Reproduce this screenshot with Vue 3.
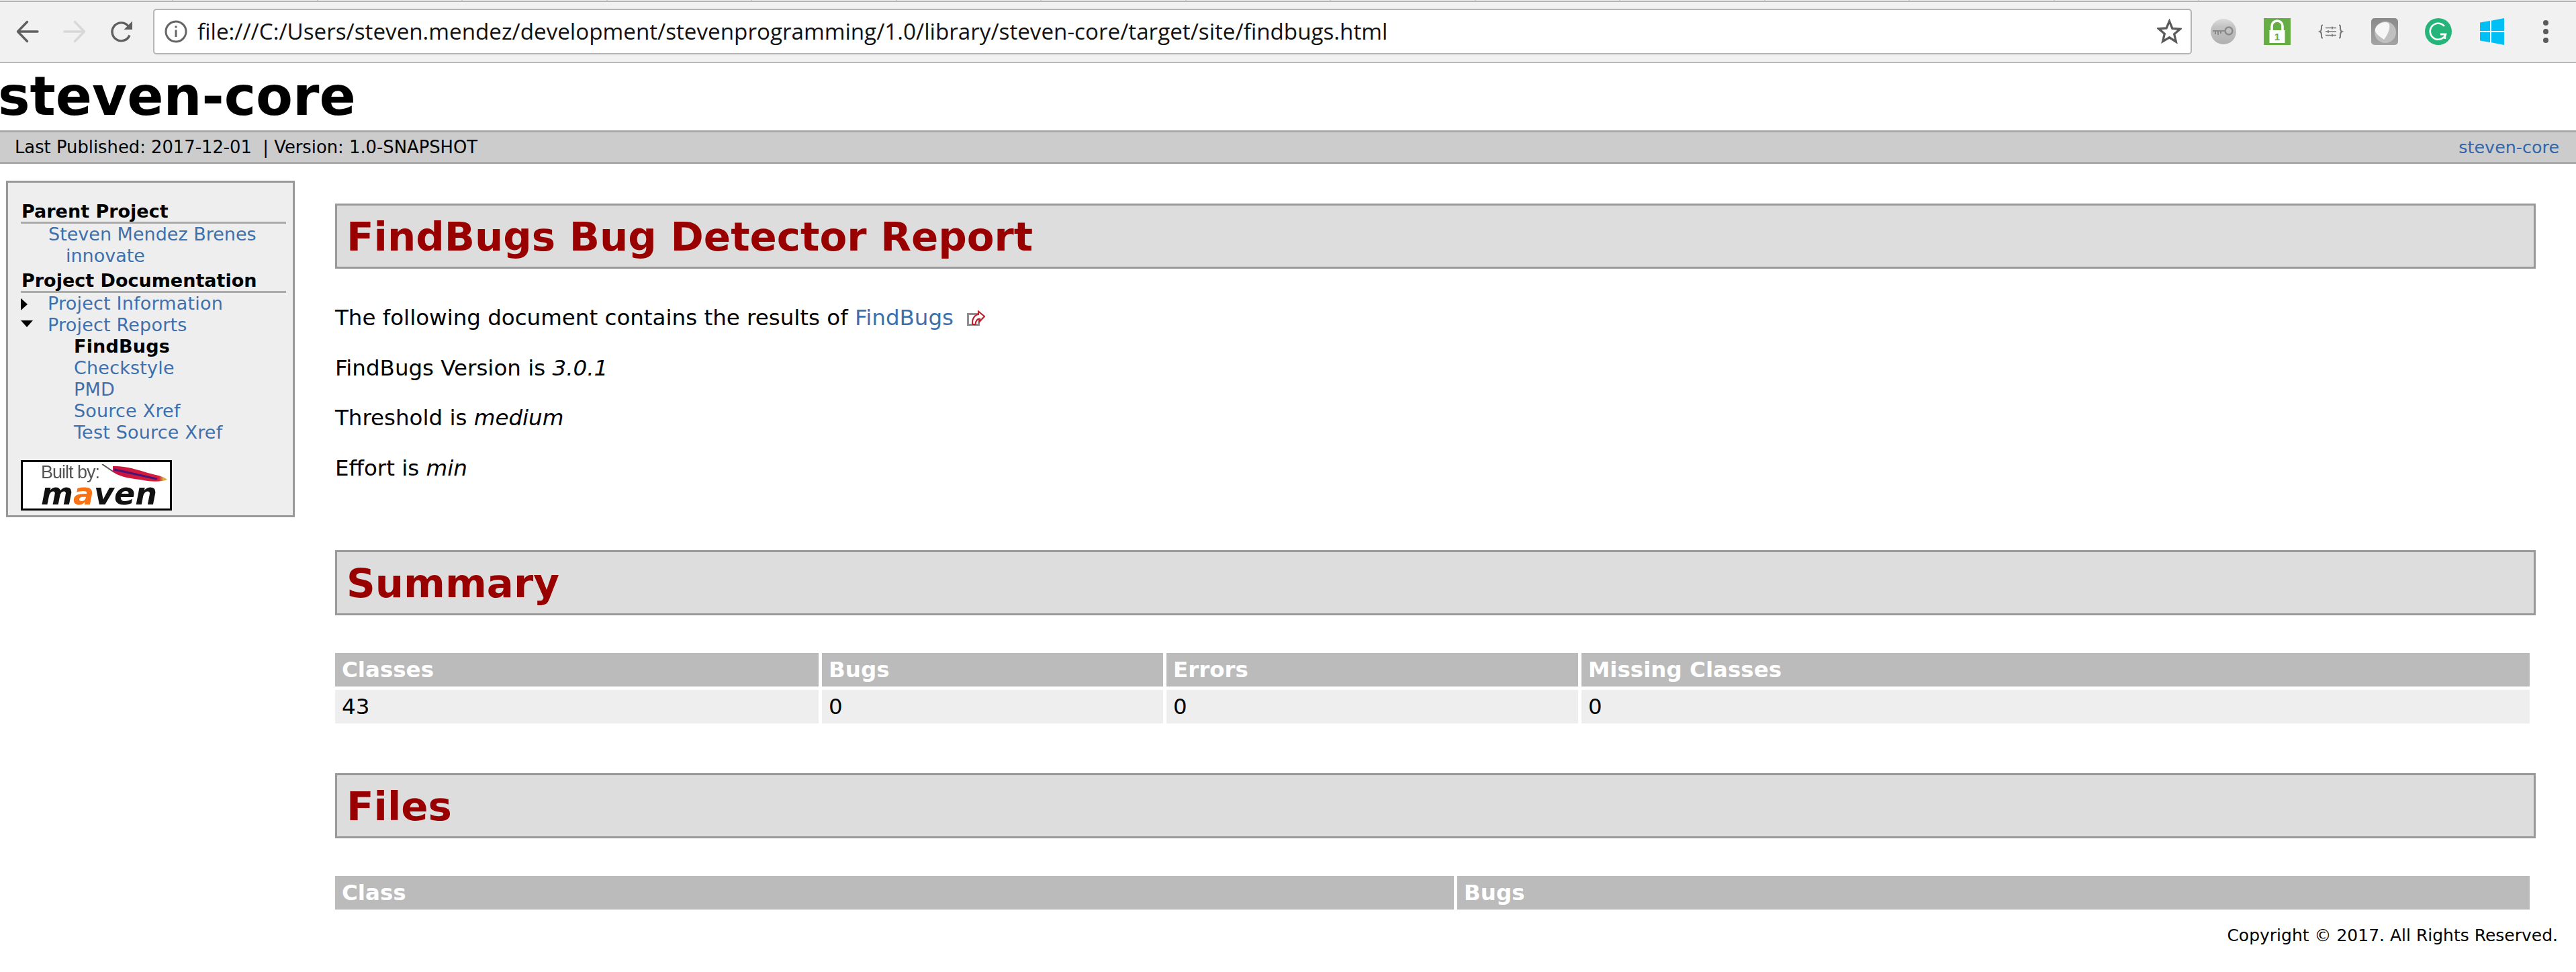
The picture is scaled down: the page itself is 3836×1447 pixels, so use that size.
<template>
  <div class="page">
    <div class="tabstrip">
      <span v-for="n in 15" :key="n" class="tab"></span>
    </div>
    <header class="toolbar">
      <svg class="nav-icon" viewBox="0 0 34 34" fill="none" stroke="#5f5f5f" stroke-width="3.4" stroke-linecap="round" stroke-linejoin="round">
        <path d="M32 17H3M16.500 2.500 2.500 17l14 14.500" />
      </svg>
      <svg class="nav-icon" viewBox="0 0 34 34" fill="none" stroke="#d8d8d8" stroke-width="3.4" stroke-linecap="round" stroke-linejoin="round">
        <path d="M2 17h29M17.500 2.500 31.500 17l-14 14.500" />
      </svg>
      <svg class="nav-icon" viewBox="0 0 34 34" fill="none" stroke="#5f5f5f" stroke-width="3.400">
        <path d="M29 22.500a13.500 13.500 0 1 1-1.500-13" />
        <path d="M33 1.500V14H20.500z" fill="#5f5f5f" stroke="none" />
      </svg>
      <div class="omnibox">
        <svg class="info" viewBox="0 0 34 34" fill="none" stroke="#666" stroke-width="3">
          <circle cx="17" cy="17" r="15" />
          <path d="M17 14.500V25" />
          <path d="M17 8.500v3" />
        </svg>
        <span class="url">file:///C:/Users/steven.mendez/development/stevenprogramming/1.0/library/steven-core/target/site/findbugs.html</span>
        <svg class="star" viewBox="0 0 36 36" fill="none" stroke="#5a5a5a" stroke-width="3.200">
          <path d="m18 3.500 4.300 10.500 11.200.9-8.500 7.300 2.600 11L18 27l-9.600 5.700 2.600-11-8.500-7.300 11.200-.9z" />
        </svg>
      </div>
      <div class="extensions">
        <svg class="ext" viewBox="0 0 40 40">
          <defs>
            <linearGradient id="keyBg" x1="0" y1="0" x2="0" y2="1">
              <stop offset="0" stop-color="#dcdcdc" />
              <stop offset=".3" stop-color="#c4c4c4" />
              <stop offset="1" stop-color="#b0b0b0" />
            </linearGradient>
          </defs>
          <circle cx="20" cy="20" r="19" fill="url(#keyBg)" />
          <circle cx="28" cy="19" r="5.500" fill="none" stroke="#8a8a8a" stroke-width="2.400" />
          <path d="M4 19h18M8 19v5M12 19v6M16 19v4" stroke="#8a8a8a" stroke-width="2" fill="none" />
        </svg>
        <div class="ext lock">
          <svg viewBox="0 0 40 40">
            <path d="M12 21V12a8 8 0 0 1 16 0v9" fill="none" stroke="#fff" stroke-width="3.600" />
            <rect x="8.500" y="18" width="23" height="19" fill="#fff" />
          </svg>
          <span class="lock-num">1</span>
        </div>
        <svg class="ext" viewBox="0 0 40 40" fill="none" stroke="#777" stroke-width="1.500">
          <path d="M8 10.500c-2.500 0-2 2-2 4.500s0 4-2.500 5c2.500 1 2.500 2.500 2.500 5s-.5 4.500 2 4.500M32 10.500c2.500 0 2 2 2 4.500s0 4 2.500 5c-2.500 1-2.500 2.500-2.500 5s.5 4.500-2 4.500" stroke-width="2" />
          <path d="M12 14.500h16M12 20h16M12 25.500h16" />
          <path d="M22 12.500v4M16 18v4M22 23.500v4" stroke="#777" />
        </svg>
        <svg class="ext" viewBox="0 0 40 40">
          <defs>
            <linearGradient id="shieldBg" x1="0" y1="0" x2="0" y2="1">
              <stop offset="0" stop-color="#8a8a8a" />
              <stop offset="1" stop-color="#a4a4a4" />
            </linearGradient>
          </defs>
          <rect width="40" height="40" rx="5" fill="url(#shieldBg)" />
          <circle cx="21" cy="21" r="16" fill="#c0c0c0" />
          <path d="M6 17c1-7 9-11 15-11 5 0 7 3 6 9-1 7-5 13-8 17-4-3-14-9-13-15z" fill="#f6f6f6" />
        </svg>
        <svg class="ext" viewBox="0 0 40 40">
          <circle cx="20" cy="20" r="20" fill="#25b57a" />
          <path d="M29 12a12 12 0 1 0 2 12h-8" fill="none" stroke="#fff" stroke-width="2.600" />
          <path d="M30 31V24h-7" fill="none" stroke="#fff" stroke-width="2.600" />
        </svg>
        <svg class="ext win" viewBox="0 0 36 40" fill="#00bff5">
          <path d="M0 6.500 15 4v15H0zM17 3.700 36 0v19H17zM0 21h15v15L0 33.500zM17 21h19v19l-19-3.700z" />
        </svg>
        <div class="dots">
          <i></i><i></i><i></i>
        </div>
      </div>
    </header>

    <div class="banner">
      <h1>steven-core</h1>
    </div>

    <div class="breadcrumbs">
      <span>Last Published: 2017-12-01 &nbsp;| Version: 1.0-SNAPSHOT</span>
      <a href="#">steven-core</a>
    </div>

    <div class="content">
      <aside class="sidebar">
        <h5>Parent Project</h5>
        <a class="nav-link parent" href="#">Steven Mendez Brenes</a>
        <a class="nav-link parent-sub" href="#">innovate</a>
        <h5 class="second">Project Documentation</h5>
        <div v-for="item in topNav" :key="item.label" class="nav-row">
          <span class="arrow" :class="item.open ? 'down' : 'right'"></span>
          <a class="nav-link" href="#">{{ item.label }}</a>
        </div>
        <template v-for="r in reports" :key="r">
          <strong v-if="r === 'FindBugs'" class="report">{{ r }}</strong>
          <a v-else class="nav-link report" href="#">{{ r }}</a>
        </template>

        <div class="maven">
          <div class="maven-inner">
            <span class="built">Built by:</span>
            <span class="maven-word">m<b>a</b>ven</span>
          </div>
          <svg class="feather" viewBox="0 0 100 30">
            <defs>
              <linearGradient id="feather" x1="0" y1="0" x2="1" y2="0">
                <stop offset="0" stop-color="#c8123f" />
                <stop offset=".85" stop-color="#d81f3a" />
                <stop offset=".93" stop-color="#d8b040" />
              </linearGradient>
            </defs>
            <path d="M2 0 20 12" stroke="#555" stroke-width="2" />
            <path d="M18 3C35 2 55 8 70 13c12 3 24 5 29 10-9 4-27 3-41 0-16-2-33-5-40-12z" fill="url(#feather)" />
            <path d="M20 8c20 4 40 9 64 14" stroke="#4a1478" stroke-width="3" fill="none" />
          </svg>
        </div>
      </aside>

      <main class="main">
        <h2>FindBugs Bug Detector Report</h2>
        <p class="first">
          The following document contains the results of
          <a href="#">FindBugs</a>
          <svg class="external" viewBox="0 0 27 23">
            <rect x="1.500" y="5.500" width="16" height="16" fill="#fff" stroke="#8f8f8f" stroke-width="3" />
            <path d="M17 1.500 26 9l-7 7.500v-4c-4 0-6 3-6.500 8.500H8.500C6.500 14 11 7 17 6z" fill="#fff" stroke="#c0202a" stroke-width="2.200" />
          </svg>
        </p>
        <p>FindBugs Version is <em>3.0.1</em></p>
        <p>Threshold is <em>medium</em></p>
        <p>Effort is <em>min</em></p>

        <h2 class="summary">Summary</h2>
        <div class="grid summary-grid">
          <div v-for="h in summaryHead" :key="h" class="th">{{ h }}</div>
          <div v-for="(v, i) in summaryRow" :key="i" class="td">{{ v }}</div>
        </div>

        <h2 class="files">Files</h2>
        <div class="grid files-grid">
          <div class="th">Class</div>
          <div class="th">Bugs</div>
        </div>
      </main>
    </div>

    <footer class="footer">Copyright © 2017. All Rights Reserved.</footer>
  </div>
</template>

<script setup>
const topNav = [
  { label: "Project Information", open: false },
  { label: "Project Reports", open: true },
];

const reports = ["FindBugs", "Checkstyle", "PMD", "Source Xref", "Test Source Xref"];

const summaryHead = ["Classes", "Bugs", "Errors", "Missing Classes"];
const summaryRow = ["43", "0", "0", "0"];
</script>

<style>
html,
body {
  margin: 0;
  background: #fff;
}
</style>

<style scoped>
.page {
  width: 3836px;
  height: 1447px;
  overflow: hidden;
  background: #fff;
  color: #000;
  font-family: "DejaVu Sans", Verdana, sans-serif;
  font-size: 32.500px;
}

.tabstrip {
  display: flex;
  height: 3px;
  background: #f1f1f1;
  border-bottom: 2px solid #b4b4b4;
  box-sizing: border-box;
}

.tab {
  width: 215.500px;
  border-right: 2px solid #cfcfcf;
  box-sizing: border-box;
}

.tab:first-child {
  width: 258px;
}

.toolbar {
  display: flex;
  align-items: center;
  height: 91px;
  box-sizing: border-box;
  background: #f1f1f1;
  border-bottom: 2px solid #b9b9b9;
  padding: 0 0 2px 24px;
}

.nav-icon {
  width: 34px;
  height: 34px;
  margin-right: 36px;
  flex: none;
}

.omnibox {
  display: flex;
  align-items: center;
  width: 3036px;
  height: 68px;
  margin-left: -6px;
  box-sizing: border-box;
  background: #fff;
  border: 2px solid #b4b4b4;
  border-radius: 5px;
  padding: 0 13px 0 15px;
  flex: none;
}

.info {
  width: 34px;
  height: 34px;
  flex: none;
}

.url {
  margin-left: 15px;
  flex: 1;
  font-family: "Open Sans", sans-serif;
  font-size: 33.200px;
  color: #111;
  white-space: nowrap;
}

.star {
  width: 37px;
  height: 37px;
  flex: none;
}

.extensions {
  display: flex;
  align-items: center;
  margin-left: 27px;
}

.ext {
  width: 40px;
  height: 40px;
  margin-right: 40px;
  flex: none;
  position: relative;
}

.lock {
  background: #66ad44;
  overflow: hidden;
}

.lock svg {
  width: 40px;
  height: 40px;
  display: block;
}

.lock-num {
  position: absolute;
  left: 0;
  right: 0;
  top: 19px;
  text-align: center;
  font-family: "Liberation Sans", sans-serif;
  font-weight: bold;
  font-size: 15px;
  line-height: 18px;
  color: #66ad44;
}

.win {
  width: 36px;
  margin-left: 2px;
  margin-right: 58px;
}

.dots {
  display: flex;
  flex-direction: column;
  gap: 5px;
}

.dots i {
  display: block;
  width: 8px;
  height: 8px;
  border-radius: 50%;
  background: #5a5a5a;
}

.banner {
  height: 100px;
  display: flex;
  align-items: center;
}

h1 {
  margin: 0 0 0 -3px;
  font-size: 80px;
  line-height: 100px;
  font-weight: bold;
}

.breadcrumbs {
  display: flex;
  justify-content: space-between;
  align-items: center;
  height: 50px;
  box-sizing: border-box;
  background: #ccc;
  border-top: 3px solid #aaa;
  border-bottom: 3px solid #aaa;
  padding: 0 25px 0 22px;
  font-size: 25.800px;
}

.breadcrumbs a {
  font-size: 25.400px;
  color: #36a;
}

a {
  color: #3d70ad;
  text-decoration: none;
}

.content {
  display: flex;
  align-items: flex-start;
}

.sidebar {
  display: flex;
  flex-direction: column;
  flex: none;
  width: 430px;
  height: 501px;
  box-sizing: border-box;
  margin: 25px 60px 0 9px;
  padding: 28px 10px 0 19px;
  background: #eee;
  border: 3px solid #999;
  font-size: 27px;
  line-height: 32px;
}

h5 {
  margin: 0;
  font-size: 27px;
  font-weight: bold;
  line-height: 30px;
  padding-left: 1px;
  border-bottom: 3px solid #aaa;
}

h5.second {
  margin-top: 6px;
}

.nav-link {
  display: block;
}

.parent {
  padding-left: 41px;
}

.parent-sub {
  padding-left: 67px;
}

.nav-row {
  display: flex;
  align-items: center;
  letter-spacing: 0.2px;
}

.arrow {
  display: block;
  width: 40px;
  flex: none;
  position: relative;
  height: 32px;
}

.arrow::before {
  content: "";
  position: absolute;
  left: 0;
  width: 0;
  height: 0;
}

.arrow.right::before {
  top: 8px;
  border-top: 9px solid transparent;
  border-bottom: 9px solid transparent;
  border-left: 10px solid #000;
}

.arrow.down::before {
  top: 9px;
  border-left: 9px solid transparent;
  border-right: 9px solid transparent;
  border-top: 10px solid #000;
}

.report {
  display: block;
  padding-left: 79px;
  letter-spacing: 0.2px;
}

.maven {
  position: relative;
  width: 225px;
  height: 75px;
  box-sizing: border-box;
  margin-top: 25px;
  background: #fff;
  border: 3px solid #000;
}

.maven-inner {
  display: flex;
  flex-direction: column;
  padding-left: 27px;
  filter: blur(0.7px);
}

.built {
  font-family: "Liberation Sans", sans-serif;
  font-size: 27px;
  line-height: 26px;
  margin-top: 2px;
  color: #555;
  letter-spacing: -1px;
}

.maven-word {
  font-family: "DejaVu Sans", sans-serif;
  font-style: italic;
  font-weight: bold;
  font-size: 46px;
  line-height: 38px;
  color: #111;
}

.maven-word b {
  color: #f97316;
}

.feather {
  position: absolute;
  left: 116px;
  top: 3px;
  width: 100px;
  height: 30px;
  filter: blur(0.5px);
}

.main {
  width: 3277px;
  margin-top: 59px;
  flex: none;
}

h2 {
  margin: 0;
  height: 97px;
  box-sizing: border-box;
  background: #ddd;
  border: 3px solid #999;
  padding-left: 14px;
  color: #900;
  font-size: 59.400px;
  font-weight: bold;
  line-height: 94px;
}

p {
  margin: 0;
  line-height: 74.500px;
}

p.first {
  margin-top: 36px;
}

.external {
  width: 27px;
  height: 23px;
  margin-left: 20px;
  vertical-align: -1px;
}

h2.summary {
  margin-top: 85px;
}

h2.files {
  margin-top: 74px;
}

.grid {
  display: grid;
  gap: 5px;
  width: 3268px;
  margin-top: 56px;
}

.summary-grid {
  grid-template-columns: 720px 508px 613px 1fr;
}

.files-grid {
  grid-template-columns: 1666px 1fr;
}

.th,
.td {
  height: 50px;
  line-height: 50px;
  padding-left: 10px;
  box-sizing: border-box;
}

.th {
  background: #bbb;
  color: #fff;
  font-weight: bold;
}

.td {
  background: #eee;
}

.footer {
  margin-top: 19px;
  padding-right: 27px;
  text-align: right;
  font-size: 25px;
  line-height: 40px;
}
</style>
